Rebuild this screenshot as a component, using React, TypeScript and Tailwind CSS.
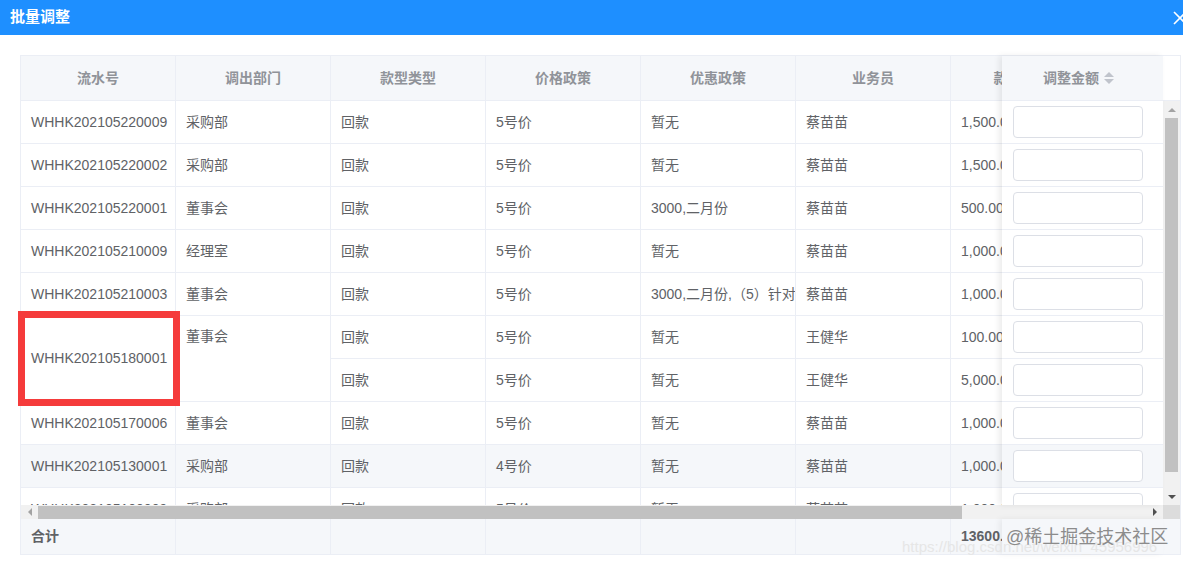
interface Row {
  no: string;
  dept: string;
  type: string;
  price: string;
  promo: string;
  staff: string;
  amount: string;
}

const rows: Row[] = [
  { no: 'WHHK202105220009', dept: '采购部', type: '回款', price: '5号价', promo: '暂无', staff: '蔡苗苗', amount: '1,500.00' },
  { no: 'WHHK202105220002', dept: '采购部', type: '回款', price: '5号价', promo: '暂无', staff: '蔡苗苗', amount: '1,500.00' },
  { no: 'WHHK202105220001', dept: '董事会', type: '回款', price: '5号价', promo: '3000,二月份', staff: '蔡苗苗', amount: '500.00' },
  { no: 'WHHK202105210009', dept: '经理室', type: '回款', price: '5号价', promo: '暂无', staff: '蔡苗苗', amount: '1,000.00' },
  { no: 'WHHK202105210003', dept: '董事会', type: '回款', price: '5号价', promo: '3000,二月份,（5）针对老客户', staff: '蔡苗苗', amount: '1,000.00' },
  { no: 'WHHK202105180001', dept: '董事会', type: '回款', price: '5号价', promo: '暂无', staff: '王健华', amount: '100.00' },
  { no: '', dept: '', type: '回款', price: '5号价', promo: '暂无', staff: '王健华', amount: '5,000.00' },
  { no: 'WHHK202105170006', dept: '董事会', type: '回款', price: '5号价', promo: '暂无', staff: '蔡苗苗', amount: '1,000.00' },
  { no: 'WHHK202105130001', dept: '采购部', type: '回款', price: '4号价', promo: '暂无', staff: '蔡苗苗', amount: '1,000.00' },
  { no: 'WHHK202105100009', dept: '采购部', type: '回款', price: '5号价', promo: '暂无', staff: '蔡苗苗', amount: '1,000.00' },
];

const headers = ['流水号', '调出部门', '款型类型', '价格政策', '优惠政策', '业务员'];

const cell = 'w-[155px] shrink-0 px-[10px] border-r border-[#ebeef5] overflow-hidden whitespace-nowrap flex items-center';
const amountCell = 'w-[142px] shrink-0 px-[10px] flex items-center border-r border-[#ebeef5] whitespace-nowrap';

function Cell({ children, className = '' }: { children?: React.ReactNode; className?: string }) {
  return <div className={`${cell} ${className}`}>{children}</div>;
}

export default function App() {
  return (
    <div
      className="w-[1183px] h-[563px] bg-white relative overflow-hidden text-[14px] text-[#606266]"
      style={{ fontFamily: '"Liberation Sans", "Noto Sans CJK SC", sans-serif' }}
    >
      {/* Dialog title */}
      <div className="h-[35px] bg-[#1e8fff] flex items-center pl-[10px] relative">
        <span className="text-white text-[15px] font-bold">批量调整</span>
        <svg className="absolute left-[1173px] top-[11px]" width="14" height="14" viewBox="0 0 14 14">
          <path d="M1 1L13 13M13 1L1 13" stroke="white" strokeWidth="1.6" />
        </svg>
      </div>

      <div className="pt-[20px] pl-[20px]">
        <div className="relative w-[1161px] border border-[#ebeef5]">
          {/* Header */}
          <div className="flex h-[45px] border-b border-[#ebeef5]">
            <div className="w-[1142px] flex overflow-hidden bg-[#f5f7fa] font-bold text-[#909399]">
              {headers.map((h) => (
                <Cell key={h} className="justify-center">{h}</Cell>
              ))}
              <div className={`${amountCell} justify-center`}>款项金额</div>
              <div className="w-[155px] shrink-0 border-r border-[#ebeef5]" />
            </div>
            <div className="w-[17px] bg-white" />
          </div>

          {/* Body */}
          <div className="flex h-[404px]">
            <div className="w-[1142px] h-[404px] overflow-hidden">
              {rows.map((r, i) => {
                if (i === 6) return null;
                const merged = i === 5;
                return (
                  <div
                    key={i}
                    className={`flex ${merged ? 'h-[86px]' : 'h-[43px] border-b border-[#ebeef5]'} ${i === 8 ? 'bg-[#f5f7fa]' : 'bg-white'}`}
                  >
                    <Cell className={merged ? 'border-b' : ''}>{r.no}</Cell>
                    <Cell className={merged ? 'items-start pt-[10px] border-b' : ''}>{r.dept}</Cell>
                    {merged ? (
                      <div className="flex flex-col">
                        {[rows[5], rows[6]].map((s, k) => (
                          <div key={k} className="flex h-[43px] border-b border-[#ebeef5]">
                            <Cell>{s.type}</Cell>
                            <Cell>{s.price}</Cell>
                            <Cell>{s.promo}</Cell>
                            <Cell>{s.staff}</Cell>
                            <div className={amountCell}>{s.amount}</div>
                          </div>
                        ))}
                      </div>
                    ) : (
                      <>
                        <Cell>{r.type}</Cell>
                        <Cell>{r.price}</Cell>
                        <Cell>{r.promo}</Cell>
                        <Cell>{r.staff}</Cell>
                        <div className={amountCell}>{r.amount}</div>
                      </>
                    )}
                  </div>
                );
              })}
            </div>
            {/* Vertical scrollbar */}
            <div className="w-[17px] h-[404px] bg-[#f1f1f1] flex flex-col items-center">
              <div className="h-[17px] flex items-center justify-center">
                <div className="w-0 h-0 border-l-[4px] border-r-[4px] border-b-[4px] border-l-transparent border-r-transparent border-b-[#a3a3a3]" />
              </div>
              <div className="w-[13px] h-[354px] bg-[#c1c1c1]" />
              <div className="flex-1" />
              <div className="h-[17px] flex items-center justify-center">
                <div className="w-0 h-0 border-l-[4px] border-r-[4px] border-t-[4px] border-l-transparent border-r-transparent border-t-[#505050]" />
              </div>
            </div>
          </div>

          {/* Horizontal scrollbar */}
          <div className="flex h-[14px]">
            <div className="w-[1142px] bg-[#f1f1f1] flex items-center">
              <div className="w-[17px] flex justify-center">
                <div className="w-0 h-0 border-t-[4px] border-b-[4px] border-r-[4px] border-t-transparent border-b-transparent border-r-[#a3a3a3]" />
              </div>
              <div className="w-[924px] h-[13px] bg-[#c1c1c1]" />
              <div className="flex-1" />
              <div className="w-[17px] flex justify-center">
                <div className="w-0 h-0 border-t-[4px] border-b-[4px] border-l-[4px] border-t-transparent border-b-transparent border-l-[#505050]" />
              </div>
            </div>
            <div className="w-[17px] bg-[#dcdcdc]" />
          </div>

          {/* Summary */}
          <div className="flex h-[35px] bg-[#f5f7fa] font-bold">
            <div className="w-[1142px] flex overflow-hidden">
              <Cell>合计</Cell>
              <Cell />
              <Cell />
              <Cell />
              <Cell />
              <Cell />
              <div className={amountCell}>13600.00</div>
            </div>
            <div className="w-[17px] bg-[#f5f7fa]" />
          </div>

          {/* Fixed right column */}
          <div className="absolute top-0 right-[17px] w-[161px] h-[449px] bg-white shadow-[-3px_0_6px_rgba(0,0,0,0.08)] overflow-hidden">
            <div className="h-[45px] bg-[#f5f7fa] border-b border-[#ebeef5] flex items-center justify-center gap-[5px] font-bold text-[#909399] pr-[8px]">
              <span>调整金额</span>
              <span className="flex flex-col gap-[2px]">
                <span className="w-0 h-0 border-l-[5px] border-r-[5px] border-b-[5px] border-l-transparent border-r-transparent border-b-[#c0c4cc]" />
                <span className="w-0 h-0 border-l-[5px] border-r-[5px] border-t-[5px] border-l-transparent border-r-transparent border-t-[#c0c4cc]" />
              </span>
            </div>
            {rows.map((_, i) => (
              <div
                key={i}
                className={`h-[43px] border-b border-[#ebeef5] flex items-center pl-[11px] ${i === 8 ? 'bg-[#f5f7fa]' : 'bg-white'}`}
              >
                <div className="w-[130px] h-[32px] bg-white border border-[#dcdfe6] rounded-[4px]" />
              </div>
            ))}
          </div>
          <div className="absolute bottom-0 right-[17px] w-[161px] h-[35px] bg-[#f5f7fa] shadow-[-3px_0_6px_rgba(0,0,0,0.06)]" />
        </div>
      </div>

      {/* Annotation box */}
      <div className="absolute left-[18px] top-[311px] w-[162px] h-[95px] border-[7px] border-[#f53b3b]" />

      {/* Watermarks */}
      <div className="absolute left-[902px] top-[536px] text-[15px] text-[#e6e6e6] whitespace-nowrap">
        https://blog.csdn.net/weixin_45956996
      </div>
      <div className="absolute left-[1006px] top-[524px] text-[18px] text-[#8c8c8c] whitespace-nowrap">
        @稀土掘金技术社区
      </div>
    </div>
  );
}
